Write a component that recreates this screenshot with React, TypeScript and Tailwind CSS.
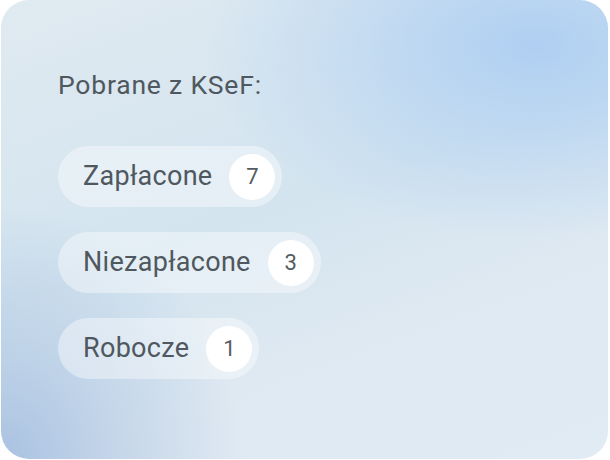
import React from 'react';

const items = [
  { label: 'Zapłacone', count: 7 },
  { label: 'Niezapłacone', count: 3 },
  { label: 'Robocze', count: 1 },
];

export default function App() {
  return (
    <div className="w-[610px] h-[460px] bg-white pl-[1px]">
      <div
        className="w-[607px] h-[459px] rounded-[28px] overflow-hidden bg-[radial-gradient(ellipse_55%_42%_at_88%_10%,#afcff2_0%,rgba(176,208,242,0.55)_45%,transparent_100%),radial-gradient(ellipse_40%_55%_at_0%_100%,#a9c2e1_0%,rgba(168,193,224,0.45)_50%,transparent_100%),linear-gradient(160deg,#e0eaf1_0%,#d3e4ef_45%,#dfe9f2_70%,#e1ebf3_100%)]"
        style={{ fontFamily: 'Roboto, "Noto Sans", sans-serif' }}
      >
        <div className="pl-[57px] pt-[68px]">
          <h2 className="text-[26.5px] leading-[34px] text-[#4f585e] font-normal tracking-[0.8px]">
            Pobrane z KSeF:
          </h2>
          <div className="mt-[44px] flex flex-col items-start gap-[25px]">
            {items.map((it) => (
              <div
                key={it.label}
                className="flex items-center h-[61px] rounded-full bg-white/40 pl-[25px] pr-[7px] gap-[17px]"
              >
                <span className="text-[27px] text-[#4f585e] leading-none tracking-[0.3px]">{it.label}</span>
                <span className="w-[46px] h-[46px] rounded-full bg-white flex items-center justify-center text-[22px] text-[#545c62]">
                  {it.count}
                </span>
              </div>
            ))}
          </div>
        </div>
      </div>
    </div>
  );
}
